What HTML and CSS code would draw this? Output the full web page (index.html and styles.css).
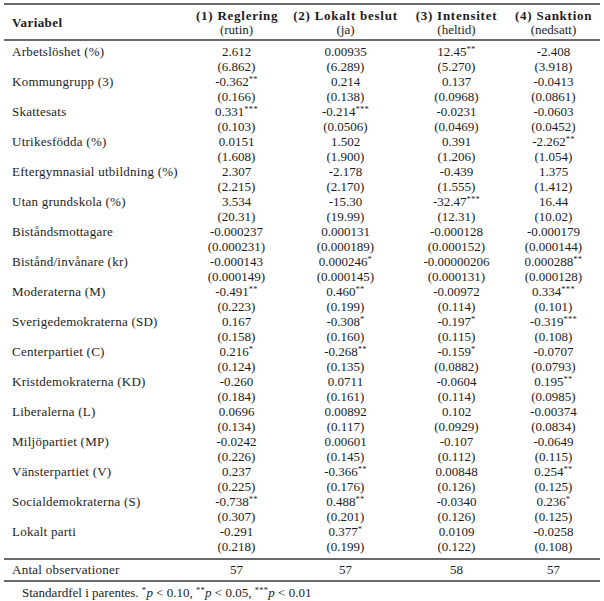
FILE: index.html
```html
<!DOCTYPE html>
<html lang="sv">
<head>
<meta charset="utf-8">
<title>Regressionstabell</title>
<link rel="stylesheet" href="styles.css">
</head>
<body>
<table class="reg">
  <colgroup>
    <col class="c-label"><col class="c1"><col class="c2"><col class="c3"><col class="c4">
  </colgroup>
  <thead>
    <tr>
      <th class="hlabel">Variabel</th>
      <th><span class="hb">(1) Reglering</span><span class="hs">(rutin)</span></th>
      <th><span class="hb">(2) Lokalt beslut</span><span class="hs">(ja)</span></th>
      <th><span class="hb">(3) Intensitet</span><span class="hs">(heltid)</span></th>
      <th><span class="hb">(4) Sanktion</span><span class="hs">(nedsatt)</span></th>
    </tr>
  </thead>
  <tbody>
    <tr class="first"><th>Arbetslöshet (%)</th><td>2.612<br>(6.862)</td><td>0.00935<br>(6.289)</td><td>12.45<sup>**</sup><br>(5.270)</td><td>-2.408<br>(3.918)</td></tr>
    <tr><th>Kommungrupp (3)</th><td>-0.362<sup>**</sup><br>(0.166)</td><td>0.214<br>(0.138)</td><td>0.137<br>(0.0968)</td><td>-0.0413<br>(0.0861)</td></tr>
    <tr><th>Skattesats</th><td>0.331<sup>***</sup><br>(0.103)</td><td>-0.214<sup>***</sup><br>(0.0506)</td><td>-0.0231<br>(0.0469)</td><td>-0.0603<br>(0.0452)</td></tr>
    <tr><th>Utrikesfödda (%)</th><td>0.0151<br>(1.608)</td><td>1.502<br>(1.900)</td><td>0.391<br>(1.206)</td><td>-2.262<sup>**</sup><br>(1.054)</td></tr>
    <tr><th>Eftergymnasial utbildning (%)</th><td>2.307<br>(2.215)</td><td>-2.178<br>(2.170)</td><td>-0.439<br>(1.555)</td><td>1.375<br>(1.412)</td></tr>
    <tr><th>Utan grundskola (%)</th><td>3.534<br>(20.31)</td><td>-15.30<br>(19.99)</td><td>-32.47<sup>***</sup><br>(12.31)</td><td>16.44<br>(10.02)</td></tr>
    <tr><th>Biståndsmottagare</th><td>-0.000237<br>(0.000231)</td><td>0.000131<br>(0.000189)</td><td>-0.000128<br>(0.000152)</td><td>-0.000179<br>(0.000144)</td></tr>
    <tr><th>Bistånd/invånare (kr)</th><td>-0.000143<br>(0.000149)</td><td>0.000246<sup>*</sup><br>(0.000145)</td><td>-0.00000206<br>(0.000131)</td><td>0.000288<sup>**</sup><br>(0.000128)</td></tr>
    <tr><th>Moderaterna (M)</th><td>-0.491<sup>**</sup><br>(0.223)</td><td>0.460<sup>**</sup><br>(0.199)</td><td>-0.00972<br>(0.114)</td><td>0.334<sup>***</sup><br>(0.101)</td></tr>
    <tr><th>Sverigedemokraterna (SD)</th><td>0.167<br>(0.158)</td><td>-0.308<sup>*</sup><br>(0.160)</td><td>-0.197<sup>*</sup><br>(0.115)</td><td>-0.319<sup>***</sup><br>(0.108)</td></tr>
    <tr><th>Centerpartiet (C)</th><td>0.216<sup>*</sup><br>(0.124)</td><td>-0.268<sup>**</sup><br>(0.135)</td><td>-0.159<sup>*</sup><br>(0.0882)</td><td>-0.0707<br>(0.0793)</td></tr>
    <tr><th>Kristdemokraterna (KD)</th><td>-0.260<br>(0.184)</td><td>0.0711<br>(0.161)</td><td>-0.0604<br>(0.114)</td><td>0.195<sup>**</sup><br>(0.0985)</td></tr>
    <tr><th>Liberalerna (L)</th><td>0.0696<br>(0.134)</td><td>0.00892<br>(0.117)</td><td>0.102<br>(0.0929)</td><td>-0.00374<br>(0.0834)</td></tr>
    <tr><th>Miljöpartiet (MP)</th><td>-0.0242<br>(0.226)</td><td>0.00601<br>(0.145)</td><td>-0.107<br>(0.112)</td><td>-0.0649<br>(0.115)</td></tr>
    <tr><th>Vänsterpartiet (V)</th><td>0.237<br>(0.225)</td><td>-0.366<sup>**</sup><br>(0.176)</td><td>0.00848<br>(0.126)</td><td>0.254<sup>**</sup><br>(0.125)</td></tr>
    <tr><th>Socialdemokraterna (S)</th><td>-0.738<sup>**</sup><br>(0.307)</td><td>0.488<sup>**</sup><br>(0.201)</td><td>-0.0340<br>(0.126)</td><td>0.236<sup>*</sup><br>(0.125)</td></tr>
    <tr class="last"><th>Lokalt parti</th><td>-0.291<br>(0.218)</td><td>0.377<sup>*</sup><br>(0.199)</td><td>0.0109<br>(0.122)</td><td>-0.0258<br>(0.108)</td></tr>
  </tbody>
  <tfoot>
    <tr><th>Antal observationer</th><td>57</td><td>57</td><td>58</td><td>57</td></tr>
  </tfoot>
</table>
<p class="note">Standardfel i parentes. <sup>*</sup><i>p</i> &lt; 0.10, <sup>**</sup><i>p</i> &lt; 0.05, <sup>***</sup><i>p</i> &lt; 0.01</p>
</body>
</html>
```
FILE: styles.css
```css
html, body {
  background: #ffffff;
}
body {
  margin: 0;
  padding: 3px 4px 0 4px;
  font-family: "Liberation Serif", "Times New Roman", serif;
  font-size: 13px;
  color: #1c1c1c;
}
.reg {
  width: 596px;
  table-layout: fixed;
  border-collapse: collapse;
  border-top: 2px solid #6a6a6a;
  border-bottom: 2px solid #6a6a6a;
}
.c-label { width: 184px; }
.c1 { width: 97px; }
.c2 { width: 121px; }
.c3 { width: 101px; }
.c4 { width: 93px; }

.reg th, .reg td {
  padding: 0 8px;
  line-height: 15px;
  font-weight: normal;
  white-space: nowrap;
}
.reg tbody th, .reg tfoot th {
  text-align: left;
  vertical-align: top;
  letter-spacing: 0.25px;
}
.reg td {
  text-align: center;
  vertical-align: top;
}
.reg thead th {
  padding-top: 4px;
  padding-bottom: 2px;
  line-height: 14px;
  text-align: center;
  vertical-align: middle;
  border-bottom: 2px solid #6a6a6a;
}
.reg thead th.hlabel {
  text-align: left;
  font-weight: bold;
  letter-spacing: 0.4px;
}
.hb {
  display: block;
  font-weight: bold;
  letter-spacing: 0.75px;
}
.hs {
  display: block;
}
.reg tbody tr.first th, .reg tbody tr.first td {
  padding-top: 3px;
}
.reg tbody tr.last th, .reg tbody tr.last td {
  padding-bottom: 4px;
}
.reg tfoot th, .reg tfoot td {
  border-top: 2px solid #6a6a6a;
  padding-top: 2px;
  padding-bottom: 3px;
}
sup {
  font-size: 8.5px;
  line-height: 0;
  vertical-align: 4px;
  letter-spacing: 0.3px;
}
.note {
  margin: 0;
  padding: 3px 0 0 18px;
  line-height: 15px;
}
.note i {
  font-style: italic;
}
```
